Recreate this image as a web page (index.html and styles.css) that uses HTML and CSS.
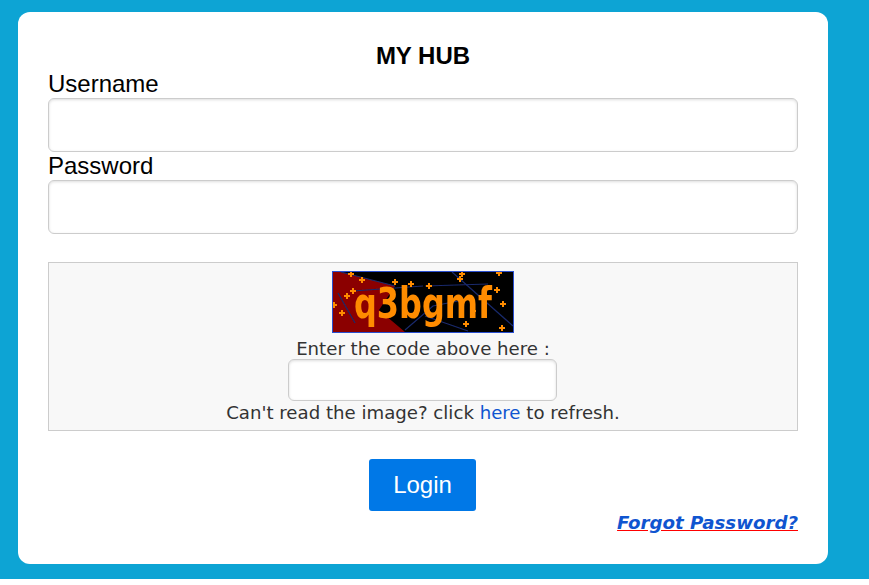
FILE: index.html
```html
<!DOCTYPE html>
<html>
<head>
  <link rel="stylesheet" href="styles.css">
</head>
<body>
  <div class="page">
    <form class="login-card">
      <div class="title">MY HUB</div>
      <label class="field-label">Username</label>
      <input class="text-input" type="text">
      <label class="field-label">Password</label>
      <input class="text-input" type="password">

      <div class="captcha-box">
        <svg class="captcha-image" width="182" height="62" viewBox="0 0 180 60">
          <defs>
            <filter id="soft"><feGaussianBlur stdDeviation="0.45"/></filter>
            <path id="spark" d="M-1 -3h2v2h2v2h-2v2h-2v-2h-2v-2h2z" fill="#ff8c00"/>
          </defs>
          <rect width="180" height="60" fill="#000"/>
          <g filter="url(#soft)">
            <polygon points="0,0 8,0 62,14 46,38 72,60 0,60" fill="#8b0000"/>
            <g stroke="#1a2a6c" stroke-width="1.2" fill="none">
              <path d="M5 21 L22 51"/>
              <path d="M8 0 L62 14"/>
              <path d="M92 14 L155 12"/>
              <path d="M119 0 L180 54"/>
              <path d="M20 19 L90 14"/>
              <path d="M72 58 L100 34 L140 26"/>
              <path d="M92 44 L135 59"/>
            </g>
            <text class="captcha-text" transform="translate(21 46) scale(1 1.25)" textLength="138" lengthAdjust="spacingAndGlyphs">q3bgmf</text>
            <use href="#spark" x="18" y="2"/>
            <use href="#spark" x="29" y="8"/>
            <use href="#spark" x="62" y="10"/>
            <use href="#spark" x="78" y="12"/>
            <use href="#spark" x="96" y="14"/>
            <use href="#spark" x="129" y="2"/>
            <use href="#spark" x="127" y="7"/>
            <use href="#spark" x="166" y="1"/>
            <use href="#spark" x="164" y="18"/>
            <use href="#spark" x="170" y="32"/>
            <use href="#spark" x="133" y="52"/>
            <use href="#spark" x="169" y="56"/>
            <use href="#spark" x="140" y="39"/>
            <use href="#spark" x="9" y="41"/>
            <use href="#spark" x="14" y="24"/>
            <use href="#spark" x="20" y="19"/>
            <use href="#spark" x="1" y="33"/>
          </g>
        </svg>
        <div class="captcha-line captcha-prompt">Enter the code above here :</div>
        <input class="captcha-input" type="text">
        <div class="captcha-line">Can't read the image? click <a class="refresh-link" href="#">here</a> to refresh.</div>
      </div>

      <div class="button-row">
        <button class="login-button" type="button">Login</button>
      </div>
      <div class="forgot-row">
        <a class="forgot-link" href="#">Forgot Password?</a>
      </div>
    </form>
  </div>
</body>
</html>
```
FILE: styles.css
```css
body {
  margin: 0;
  background-color: #fff;
  font-family: "Liberation Sans", Arial, sans-serif;
  overflow: hidden;
}

.page {
  height: 579px;
  padding: 12px 41px 0 18px;
  box-sizing: border-box;
  background-color: #0da4d4;
}

.login-card {
  display: flex;
  flex-direction: column;
  height: 552px;
  padding: 30px;
  box-sizing: border-box;
  background-color: #fff;
  border-radius: 12px;
}

.title {
  font-size: 24px;
  line-height: 28px;
  font-weight: bold;
  text-align: center;
  color: #000;
}

.field-label {
  font-size: 24px;
  line-height: 28px;
  color: #000;
}

.text-input {
  display: block;
  width: 100%;
  height: 54px;
  box-sizing: border-box;
  border: 1px solid #ccc;
  border-radius: 6px;
  box-shadow: inset 0 1px 3px #ddd;
  background-color: #fff;
}

.captcha-box {
  display: flex;
  flex-direction: column;
  align-items: center;
  height: 169px;
  margin-top: 28px;
  padding-top: 8px;
  box-sizing: border-box;
  border: 1px solid #ccc;
  background-color: #f8f8f8;
}

.captcha-image {
  display: block;
  flex: none;
  box-sizing: border-box;
  border: 1px solid #2a4fd0;
}

.captcha-text {
  font-family: "DejaVu Sans", sans-serif;
  font-size: 34px;
  font-weight: bold;
  fill: #ff8c00;
}

.captcha-line {
  font-family: "DejaVu Sans", Verdana, sans-serif;
  font-size: 18.15px;
  line-height: 24px;
  color: #333;
  white-space: nowrap;
}

.captcha-prompt {
  padding-top: 6px;
  line-height: 20px;
}

.captcha-input {
  display: block;
  width: 269px;
  height: 42px;
  margin-right: 1px;
  box-sizing: border-box;
  border: 1px solid #ccc;
  border-radius: 6px;
  box-shadow: inset 0 1px 3px #ddd;
  background-color: #fff;
}

.refresh-link {
  color: #0f55d0;
  text-decoration: none;
}

.button-row {
  display: flex;
  justify-content: center;
  margin-top: 28px;
}

.login-button {
  width: 107px;
  height: 52px;
  margin-right: 1px;
  padding: 0;
  border: none;
  border-radius: 3px;
  background-color: #0078e7;
  color: #fff;
  font-family: "Liberation Sans", Arial, sans-serif;
  font-size: 24px;
}

.forgot-row {
  margin-top: 1px;
  text-align: right;
}

.forgot-link {
  font-family: "DejaVu Sans", Verdana, sans-serif;
  font-size: 18.2px;
  font-weight: bold;
  font-style: italic;
  color: #0f55d0;
  text-decoration: underline;
  text-decoration-color: #f00;
}
```
